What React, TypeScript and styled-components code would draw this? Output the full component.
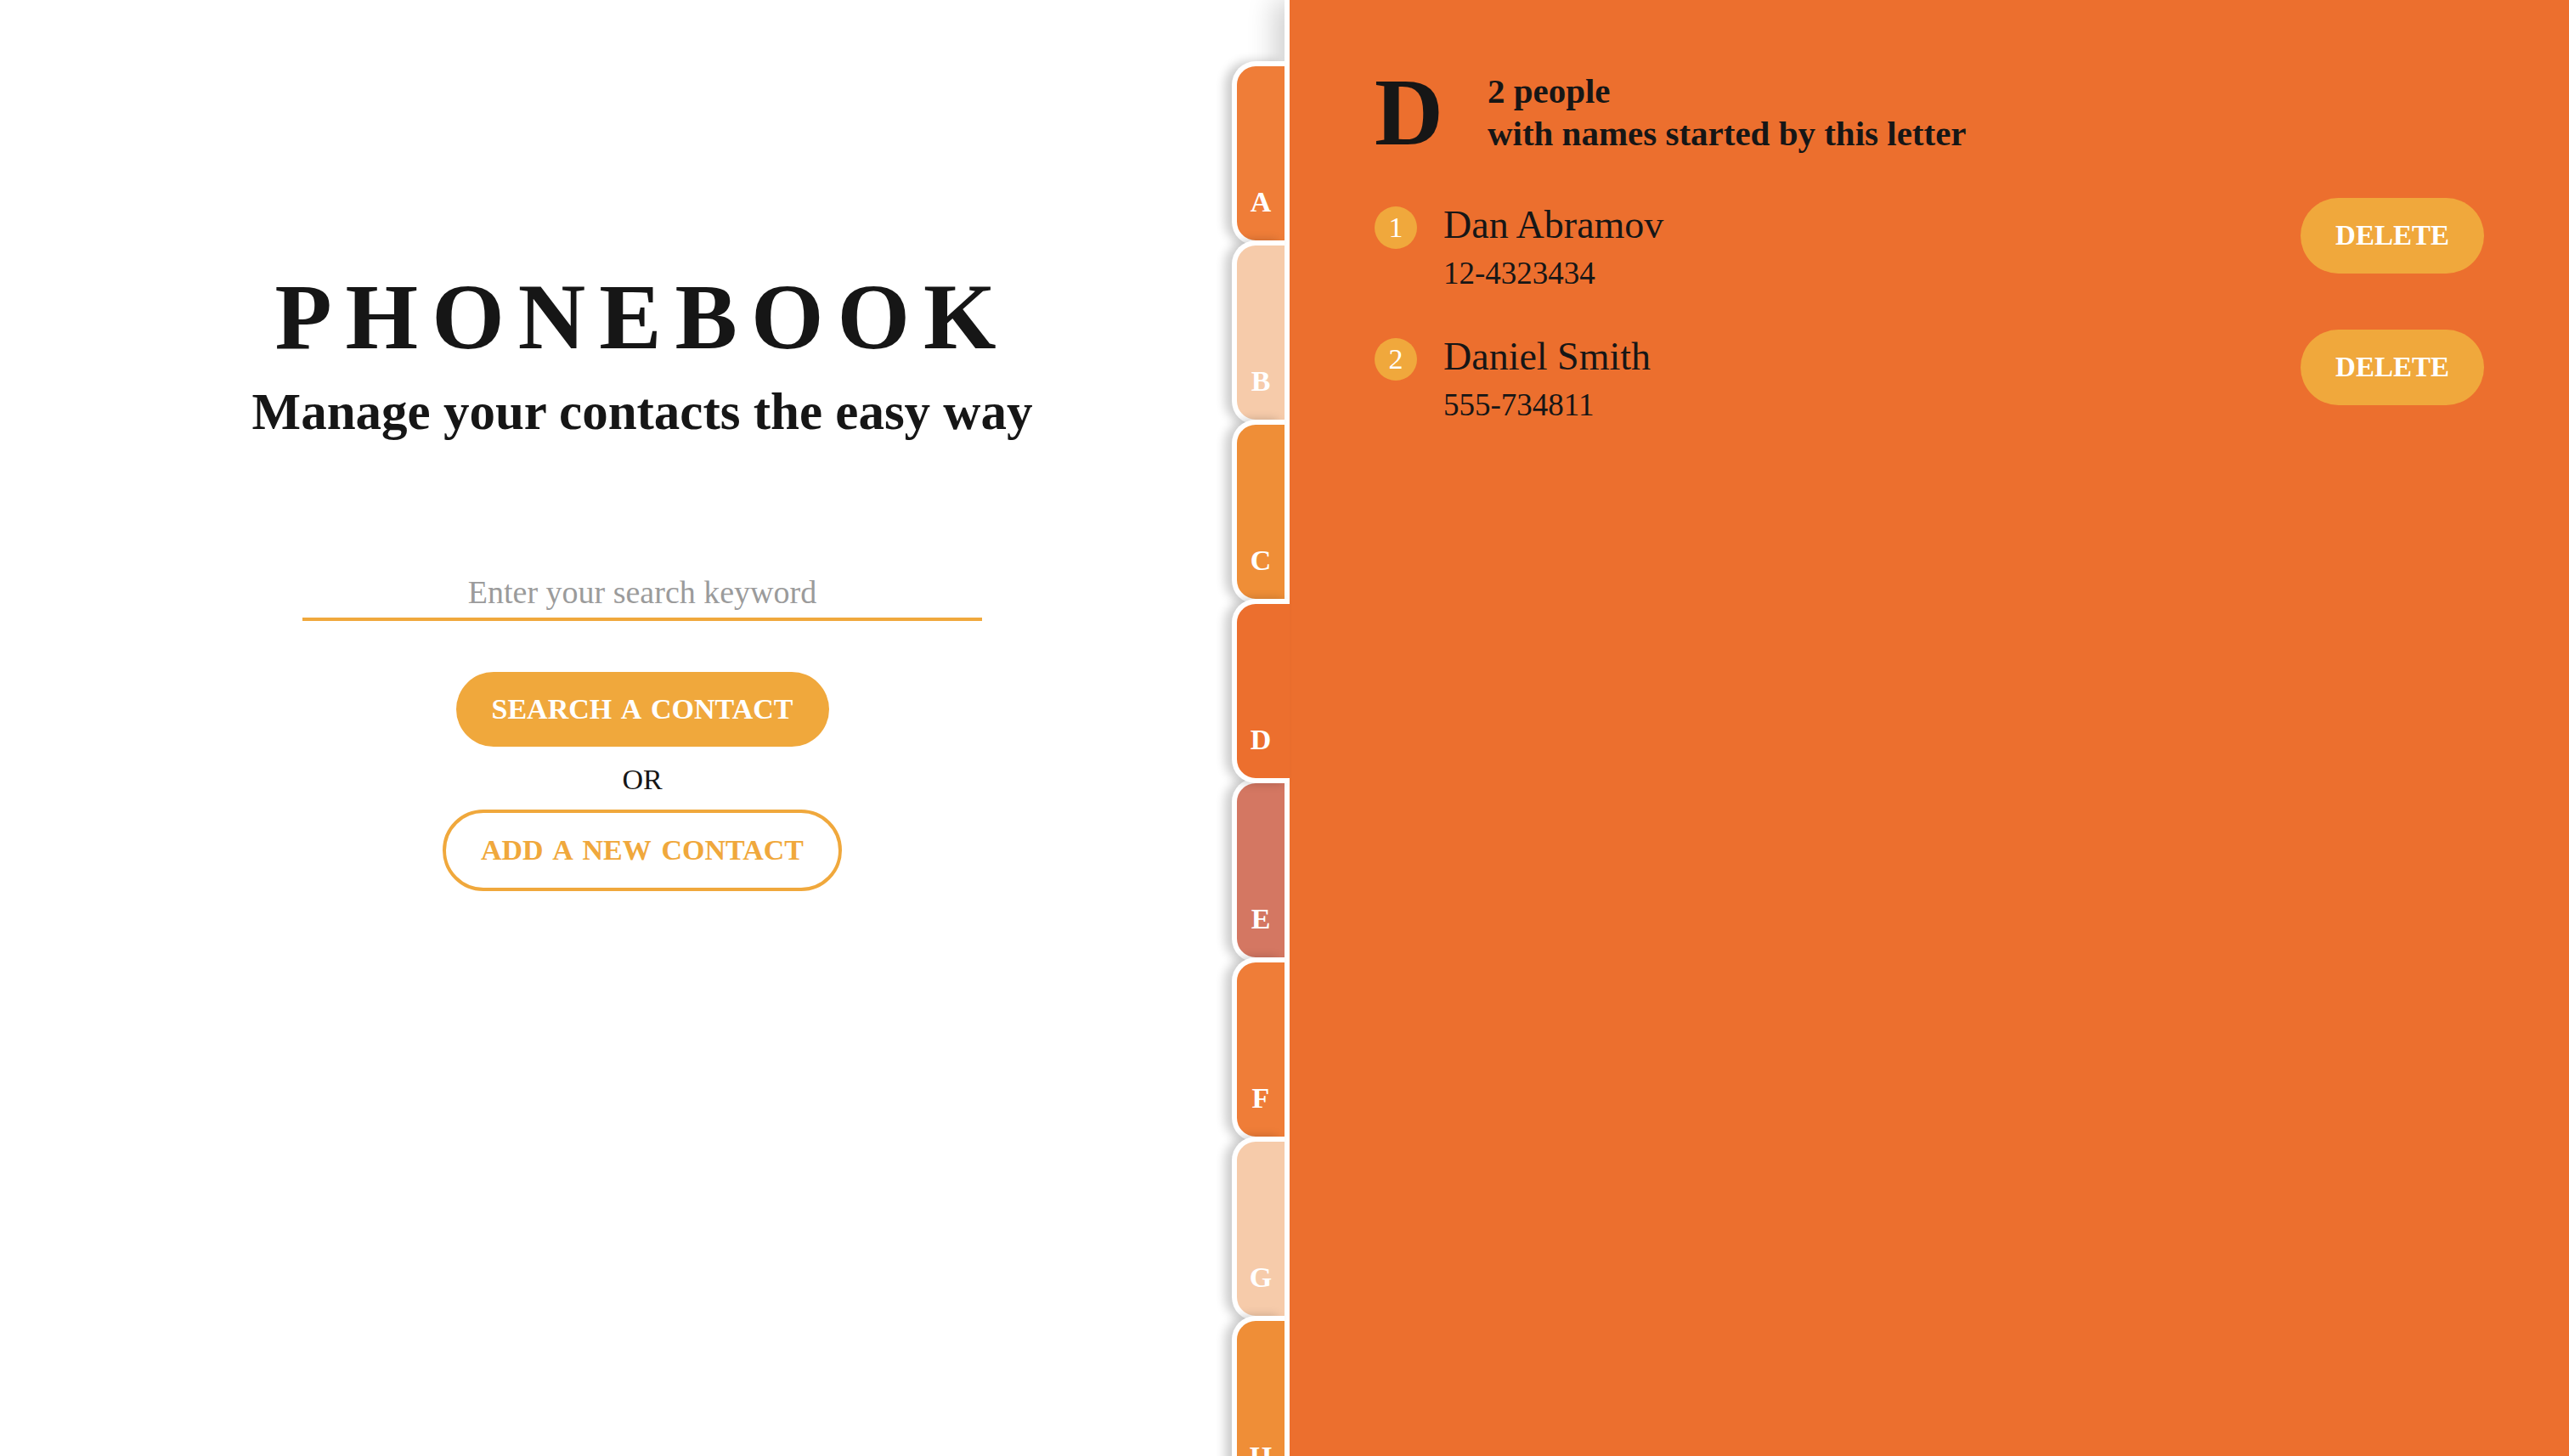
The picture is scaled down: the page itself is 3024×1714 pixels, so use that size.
import React from 'react';
import styled, { createGlobalStyle } from 'styled-components';

const ACCENT = '#F0A83C';
const PANEL = '#EC6F2E';
const INK = '#161616';

const TAB_COLORS = ['#EF7D38', '#F6CBAA', '#EF8E37', PANEL, '#D47762'];
const LETTERS = 'ABCDEFGHIJKLMNOPQRSTUVWXYZ'.split('');

const contacts = [
  { name: 'Dan Abramov', phone: '12-4323434' },
  { name: 'Daniel Smith', phone: '555-734811' },
];

const GlobalStyle = createGlobalStyle`
  html, body {
    margin: 0;
    padding: 0;
    height: 100%;
    overflow: hidden;
    background: #fff;
  }
  body {
    font-family: 'Liberation Serif', 'Times New Roman', serif;
    color: ${INK};
  }
  #root {
    height: 100%;
  }
  * {
    box-sizing: border-box;
  }
`;

const Page = styled.div`
  display: flex;
  height: 100vh;
`;

const Intro = styled.section`
  width: 50%;
  display: flex;
  flex-direction: column;
  align-items: center;
  padding-top: 318px;
`;

const Title = styled.h1`
  margin: 0;
  font-size: 110px;
  line-height: 1;
  font-weight: 700;
  letter-spacing: 16px;
`;

const Tagline = styled.h2`
  margin: 20px 0 0;
  font-size: 61px;
  line-height: 73px;
  font-weight: 700;
`;

const SearchInput = styled.input`
  margin-top: 153px;
  width: 800px;
  height: 57px;
  padding: 0 0 7px;
  border: none;
  border-bottom: 4px solid ${ACCENT};
  background: transparent;
  outline: none;
  font-family: inherit;
  font-size: 38px;
  color: ${INK};
  text-align: center;

  &::placeholder {
    color: #9b9b9b;
  }
`;

const PillButton = styled.button<{ outline?: boolean }>`
  height: ${(p) => (p.outline ? '96px' : '88px')};
  padding: 0 ${(p) => (p.outline ? '41px' : '42px')};
  border: ${(p) => (p.outline ? `4px solid ${ACCENT}` : 'none')};
  border-radius: 48px;
  background: ${(p) => (p.outline ? '#fff' : ACCENT)};
  color: ${(p) => (p.outline ? ACCENT : '#fff')};
  font-family: inherit;
  font-size: 34px;
  font-weight: 700;
  word-spacing: 4px;
  cursor: pointer;
`;

const SearchButton = styled(PillButton)`
  margin-top: 60px;
`;

const AddButton = styled(PillButton)`
  margin-top: 15px;
`;

const Or = styled.span`
  margin-top: 19px;
  font-size: 34px;
  line-height: 40px;
`;

const Panel = styled.section`
  position: relative;
  flex: 1;
  background: ${PANEL};
  border-left: 6px solid #fff;
  box-shadow: -12px 0 30px rgba(0, 0, 0, 0.18);
  padding: 82px 100px 0;
`;

const TabRail = styled.nav`
  position: absolute;
  top: 72px;
  left: -68px;
  width: 68px;
  display: flex;
  flex-direction: column;
`;

const Tab = styled.div<{ color: string; active?: boolean }>`
  position: relative;
  z-index: ${(p) => (p.active ? 2 : 1)};
  flex: none;
  width: ${(p) => (p.active ? '68px' : '62px')};
  height: 217px;
  margin-top: -6px;
  padding: 0 ${(p) => (p.active ? '6px' : '0')} 28px 0;
  border: 6px solid #fff;
  border-right: none;
  border-radius: 28px 0 0 28px;
  background: ${(p) => p.color};
  box-shadow: -8px 0 12px rgba(0, 0, 0, 0.2);
  display: flex;
  align-items: flex-end;
  justify-content: center;
  color: #fff;
  font-size: 34px;
  line-height: 1;
  font-weight: 700;

  &:first-child {
    margin-top: 0;
  }
`;

const Header = styled.header`
  display: flex;
  align-items: flex-end;
  gap: 52px;
`;

const BigLetter = styled.span`
  font-size: 112px;
  line-height: 100px;
  font-weight: 700;
`;

const Summary = styled.p`
  margin: 0;
  font-size: 41px;
  line-height: 50px;
  font-weight: 700;
`;

const ContactList = styled.ul`
  margin: 51px 0 0;
  padding: 0;
  list-style: none;
  display: flex;
  flex-direction: column;
  gap: 44px;
`;

const Row = styled.li`
  display: flex;
  align-items: flex-start;
`;

const Badge = styled.span`
  flex: none;
  width: 50px;
  height: 50px;
  margin-top: 10px;
  border-radius: 50%;
  background: ${ACCENT};
  color: #fff;
  font-size: 34px;
  display: flex;
  align-items: center;
  justify-content: center;
`;

const Info = styled.div`
  margin-left: 31px;
  padding-top: 7px;
  display: flex;
  flex-direction: column;
  gap: 10px;
`;

const Name = styled.span`
  font-size: 46px;
  line-height: 50px;
`;

const Phone = styled.span`
  font-size: 37px;
  line-height: 44px;
`;

const DeleteButton = styled.button`
  margin-left: auto;
  height: 89px;
  padding: 0 41px;
  border: none;
  border-radius: 45px;
  background: ${ACCENT};
  color: #fff;
  font-family: inherit;
  font-size: 33px;
  font-weight: 700;
  cursor: pointer;
`;

export default function App() {
  const active = 'D';
  return (
    <>
      <GlobalStyle />
      <Page>
        <Intro>
          <Title>PHONEBOOK</Title>
          <Tagline>Manage your contacts the easy way</Tagline>
          <SearchInput placeholder="Enter your search keyword" />
          <SearchButton>SEARCH A CONTACT</SearchButton>
          <Or>OR</Or>
          <AddButton outline>ADD A NEW CONTACT</AddButton>
        </Intro>
        <Panel>
          <TabRail>
            {LETTERS.map((l, i) => (
              <Tab key={l} color={TAB_COLORS[i % TAB_COLORS.length]} active={l === active}>
                {l}
              </Tab>
            ))}
          </TabRail>
          <Header>
            <BigLetter>{active}</BigLetter>
            <Summary>
              {contacts.length} people
              <br />
              with names started by this letter
            </Summary>
          </Header>
          <ContactList>
            {contacts.map((c, i) => (
              <Row key={c.name}>
                <Badge>{i + 1}</Badge>
                <Info>
                  <Name>{c.name}</Name>
                  <Phone>{c.phone}</Phone>
                </Info>
                <DeleteButton>DELETE</DeleteButton>
              </Row>
            ))}
          </ContactList>
        </Panel>
      </Page>
    </>
  );
}
